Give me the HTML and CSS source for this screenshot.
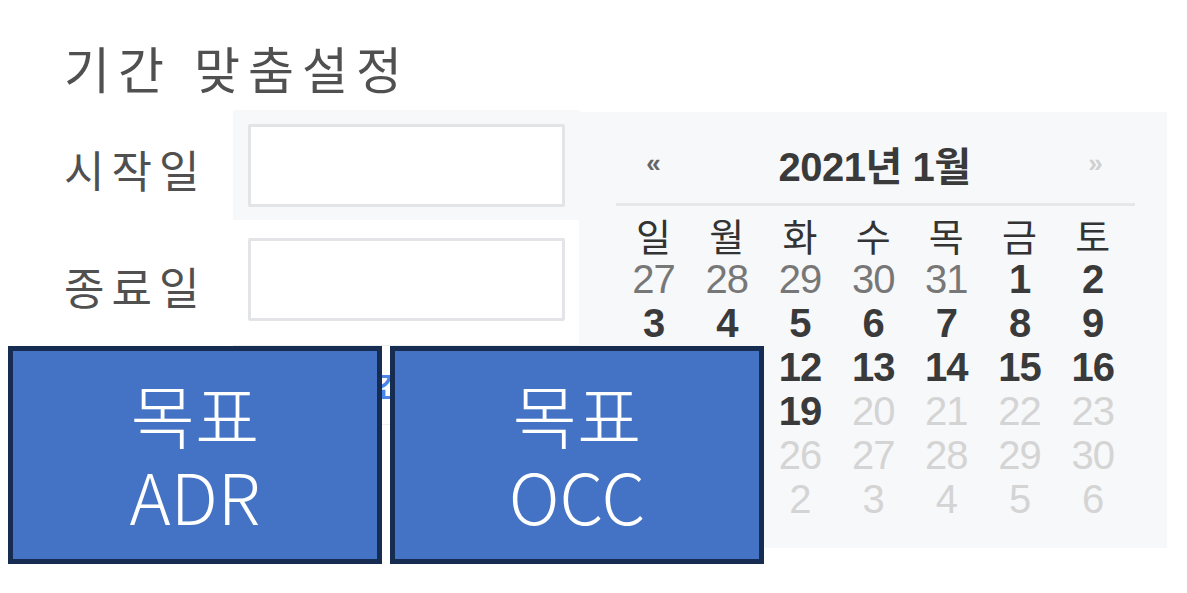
FILE: index.html
```html
<!DOCTYPE html>
<html lang="ko">
<head>
<meta charset="utf-8">
<title>기간 맞춤설정</title>
<link rel="stylesheet" href="styles.css">
</head>
<body>
<div class="page">
  <h1 class="title">기간 맞춤설정</h1>
  <div class="form">
    <div class="label label-start">시작일</div>
    <div class="field field-start"><div class="input"></div></div>
    <div class="label label-end">종료일</div>
    <div class="field field-end"><div class="input"></div></div>
    <div class="label"></div>
    <div class="apply"><span class="apply-text">기간 설정</span></div>

    <div class="calendar">
      <div class="cal-head">
        <span class="nav prev">«</span>
        <span class="month">2021년 1월</span>
        <span class="nav next">»</span>
      </div>
      <div class="cal-grid">
        <span class="dow">일</span><span class="dow">월</span><span class="dow">화</span><span class="dow">수</span><span class="dow">목</span><span class="dow">금</span><span class="dow">토</span>
        <span class="d old">27</span><span class="d old">28</span><span class="d old">29</span><span class="d old">30</span><span class="d old">31</span><span class="d cur">1</span><span class="d cur">2</span>
        <span class="d cur">3</span><span class="d cur">4</span><span class="d cur">5</span><span class="d cur">6</span><span class="d cur">7</span><span class="d cur">8</span><span class="d cur">9</span>
        <span class="d cur">10</span><span class="d cur">11</span><span class="d cur">12</span><span class="d cur">13</span><span class="d cur">14</span><span class="d cur">15</span><span class="d cur">16</span>
        <span class="d cur">17</span><span class="d cur">18</span><span class="d cur">19</span><span class="d dis">20</span><span class="d dis">21</span><span class="d dis">22</span><span class="d dis">23</span>
        <span class="d dis">24</span><span class="d dis">25</span><span class="d dis">26</span><span class="d dis">27</span><span class="d dis">28</span><span class="d dis">29</span><span class="d dis">30</span>
        <span class="d dis">31</span><span class="d dis">1</span><span class="d dis">2</span><span class="d dis">3</span><span class="d dis">4</span><span class="d dis">5</span><span class="d dis">6</span>
      </div>
    </div>
  </div>

  <div class="targets">
    <div class="target"><span>목표</span><span>ADR</span></div>
    <div class="target"><span>목표</span><span>OCC</span></div>
  </div>
</div>
</body>
</html>
```

FILE: styles.css
```css
* { box-sizing: border-box; }

html, body {
  margin: 0;
  padding: 0;
  background: #ffffff;
}

body {
  font-family: "Noto Sans CJK KR", "Noto Sans", sans-serif;
  color: #555;
}

.page {
  position: relative;
  width: 1187px;
  height: 593px;
  padding: 35px 0 0 64px;
  overflow: hidden;
}

.title {
  margin: 0;
  font-size: 50px;
  font-weight: 400;
  letter-spacing: 8px;
  line-height: 64px;
  height: 75px;
  color: #505050;
}

.form {
  position: relative;
  display: grid;
  grid-template-columns: 169px 347px;
  grid-template-rows: 110px 118px 90px;
}

.label {
  display: flex;
  align-items: center;
  font-size: 44px;
  letter-spacing: 7px;
  color: #505050;
}

.label-start { padding-top: 8px; }
.label-end { padding-top: 14px; }

.field {
  padding: 14px 15px 0 15px;
}

.field-start {
  background: #f7f8fa;
}

.field-end {
  padding-top: 18px;
}

.input {
  width: 317px;
  height: 83px;
  background: #fff;
  border: 3px solid #e3e4e8;
  border-radius: 2px;
}

.apply {
  margin-top: 7px;
  height: 80px;
  border-top: 1px solid #eceef1;
  border-bottom: 1px solid #eceef1;
  display: flex;
  align-items: center;
  justify-content: center;
}

.apply-text {
  font-size: 28px;
  color: #4a86e8;
  font-weight: 700;
}

/* datepicker popup */
.calendar {
  position: absolute;
  left: 515px;
  top: 2px;
  width: 588px;
  height: 436px;
  background: #f7f8fa;
  padding: 18px 35px 0 38px;
}

.cal-head {
  display: grid;
  grid-template-columns: 73px 1fr 73px;
  align-items: center;
  border-bottom: 3px solid #e6e7ea;
  margin: 0 -3px 0 -1px;
  padding: 0 3px 6px 1px;
  height: 76px;
}

.nav {
  text-align: center;
  font-family: "Liberation Sans", Arial, sans-serif;
  font-size: 26px;
  font-weight: 700;
}

.prev { color: #666; }
.next { color: #d0d0d0; }

.month {
  text-align: center;
  font-family: "Liberation Sans", "Noto Sans CJK KR", sans-serif;
  font-size: 40px;
  font-weight: 700;
  color: #3a3a3a;
  letter-spacing: -0.5px;
}

.cal-grid {
  display: grid;
  grid-template-columns: repeat(7, 73.2px);
  grid-auto-rows: 44px;
  margin-top: 7px;
}

.dow {
  text-align: center;
  line-height: 44px;
  font-size: 38px;
  color: #333;
  font-family: "Noto Sans CJK KR", sans-serif;
}

.d {
  text-align: center;
  line-height: 44px;
  font-family: "Liberation Sans", Arial, sans-serif;
  font-size: 40px;
  letter-spacing: -1px;
}

.old { color: #777; }
.cur { color: #3a3a3a; font-weight: 700; }
.dis { color: #d4d4d4; }

/* overlay tiles */
.targets {
  position: absolute;
  left: 8px;
  top: 346px;
  display: flex;
  gap: 8px;
}

.target {
  width: 374px;
  height: 218px;
  background: #4472c4;
  border: 5px solid #172c51;
  color: #fff;
  display: flex;
  flex-direction: column;
  align-items: center;
  justify-content: center;
  font-family: "Noto Sans CJK KR", "Noto Sans", sans-serif;
  font-weight: 300;
  font-size: 70px;
  line-height: 81px;
  padding-bottom: 2px;
}
```
